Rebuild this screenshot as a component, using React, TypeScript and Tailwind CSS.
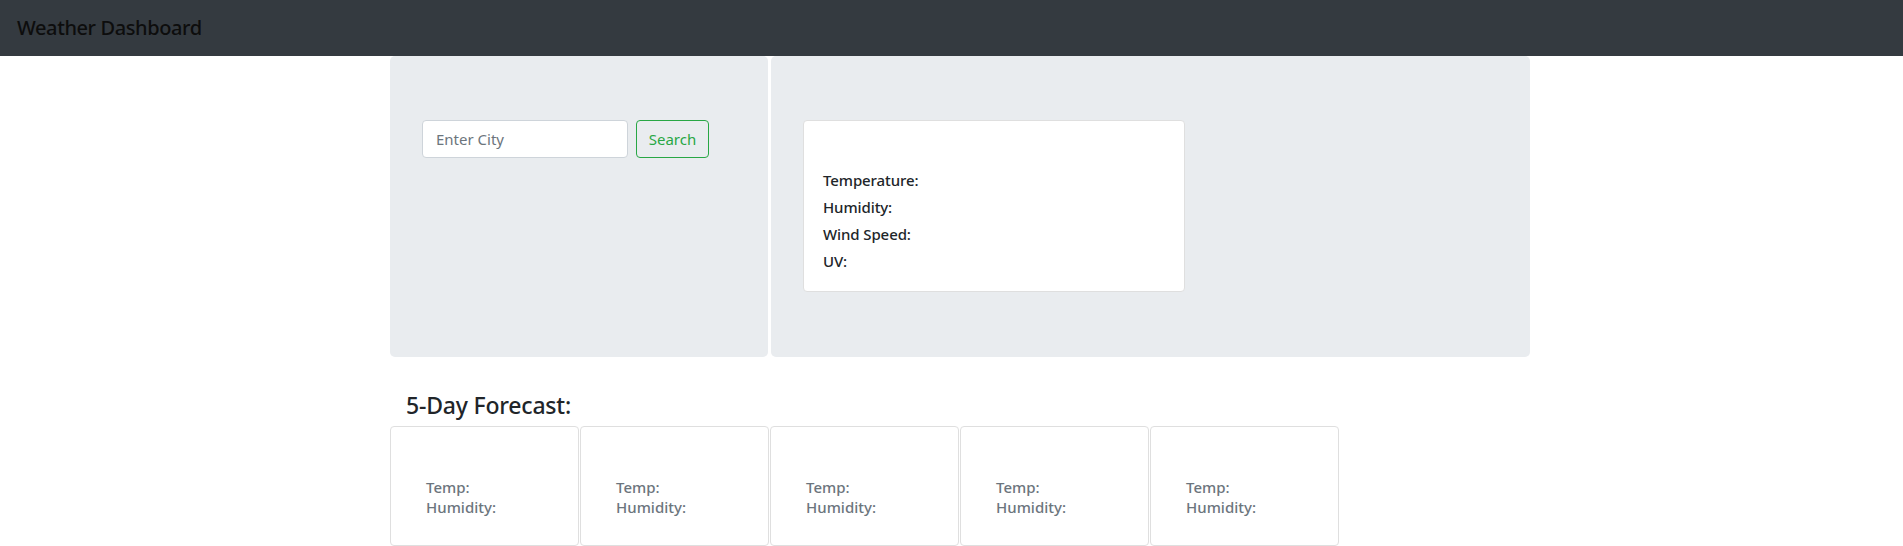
import React from "react";

const days = [0, 1, 2, 3, 4];

export default function App() {
  return (
    <div className="min-h-[546px] bg-white text-[#212529] font-['Noto_Sans',sans-serif]">
      <nav className="h-[56px] bg-[#343a40] flex items-center px-[17px]">
        <span className="text-[20px] leading-[30px] font-medium text-[#0d0d0d] tracking-[-0.4px]">Weather Dashboard</span>
      </nav>

      <div className="flex gap-[3px] pl-[390px]">
        <div className="w-[378px] h-[301px] bg-[#e9ecef] rounded-[5px] pt-[64px] px-[32px]">
          <div className="flex gap-[8px]">
            <input
              placeholder="Enter City"
              className="w-[206px] h-[38px] bg-white border border-[#ced4da] rounded-[4px] px-[13px] text-[15px] placeholder:text-[#6c757d] outline-none"
            />
            <button className="w-[73px] h-[38px] border border-[#28a745] rounded-[4px] text-[15px] text-[#28a745]">
              Search
            </button>
          </div>
        </div>
        <div className="w-[759px] h-[301px] bg-[#e9ecef] rounded-[5px] pt-[64px] pl-[32px]">
          <div className="w-[382px] h-[172px] bg-white border border-[#dfdfdf] rounded-[4px] pt-[46px] px-[19px]">
            {["Temperature:", "Humidity:", "Wind Speed:", "UV:"].map((t) => (
              <p key={t} className="text-[15px] leading-[27px] font-medium text-[#212529] tracking-[-0.1px]">
                {t}
              </p>
            ))}
          </div>
        </div>
      </div>

      <h4 className="mt-[34px] pl-[406px] text-[23px] leading-[29px] font-medium tracking-[-0.2px]">5-Day Forecast:</h4>

      <div className="flex gap-[1px] pl-[390px] mt-[6px]">
        {days.map((d) => (
          <div key={d} className="w-[189px] h-[120px] border border-[#dfdfdf] rounded-[4px] pt-[50px] pl-[35px]">
            <p className="text-[15px] leading-[20px] font-medium text-[#6c757d]">Temp:</p>
            <p className="text-[15px] leading-[20px] font-medium text-[#6c757d]">Humidity:</p>
          </div>
        ))}
      </div>
    </div>
  );
}
